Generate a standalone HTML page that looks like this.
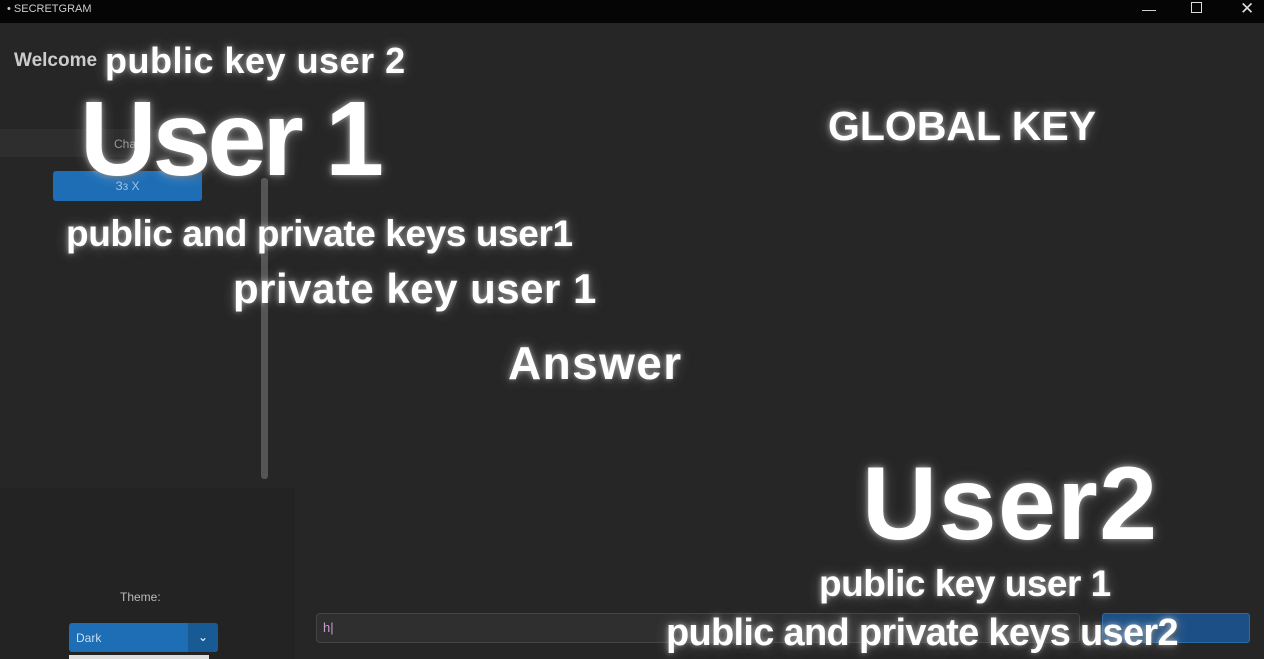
<!DOCTYPE html><html><head><style>
body{margin:0;width:1264px;height:659px;overflow:hidden;background:#262626;font-family:"Liberation Sans",sans-serif;position:relative}
.a{position:absolute}
.t{position:absolute;color:#fff;font-weight:bold;white-space:nowrap;text-shadow:0 0 6px rgba(255,255,255,.6),0 0 14px rgba(200,200,200,.4),2px 2px 3px rgba(0,0,0,.5);line-height:1}
</style></head><body>
<div class="a" style="left:0;top:0;width:1264px;height:23px;background:#050505"></div>
<div class="a" style="left:7px;top:3px;color:#ccc;font-size:11px">• SECRETGRAM</div>
<div class="a" style="left:1142px;top:1px;color:#ddd;font-size:14px">—</div>
<div class="a" style="left:1191px;top:2px;width:9px;height:9px;border:1px solid #ddd"></div>
<div class="a" style="left:1240px;top:-1px;color:#ddd;font-size:17px">✕</div>
<div class="a" style="left:0;top:23px;width:295px;height:636px;background:#232323"></div>
<div class="a" style="left:0;top:23px;width:295px;height:465px;background:#262626"></div>
<div class="a" style="left:14px;top:50px;color:#ccc;font-size:19px;font-weight:bold">Welcome</div>
<div class="a" style="left:0;top:129px;width:210px;height:28px;background:#2e2e2e"></div>
<div class="a" style="left:114px;top:137px;color:#999;font-size:12px">Cha</div>
<div class="a" style="left:53px;top:171px;width:149px;height:30px;background:#1e6eb5;border-radius:3px;color:#9cc2e6;font-size:12px;text-align:center;line-height:30px">Зз X</div>
<div class="a" style="left:261px;top:178px;width:7px;height:301px;background:#555;border-radius:3px"></div>
<div class="a" style="left:120px;top:590px;color:#bbb;font-size:12px">Theme:</div>
<div class="a" style="left:69px;top:623px;width:149px;height:29px;background:#1e6eb5;border-radius:3px"></div>
<div class="a" style="left:188px;top:623px;width:30px;height:29px;background:#175a94;border-radius:0 3px 3px 0;color:#fff;font-size:12px;text-align:center;line-height:29px">⌄</div>
<div class="a" style="left:76px;top:631px;color:#c8dcf0;font-size:12px">Dark</div>
<div class="a" style="left:69px;top:655px;width:140px;height:4px;background:#ddd"></div>
<div class="a" style="left:316px;top:613px;width:762px;height:28px;background:#2f2f2f;border:1px solid #444;border-radius:4px"></div>
<div class="a" style="left:323px;top:620px;color:#c9c;font-size:13px">h|</div>
<div class="a" style="left:1102px;top:613px;width:146px;height:28px;background:#1b4f85;border:1px solid #2a6aa8;border-radius:3px"></div>
<div class="t" style="left:105px;top:43px;font-size:36px;letter-spacing:0.5px">public key user 2</div>
<div class="t" style="left:80px;top:86px;font-size:106px;letter-spacing:-4px">User 1</div>
<div class="t" style="left:828px;top:106px;font-size:41px;letter-spacing:0px">GLOBAL KEY</div>
<div class="t" style="left:66px;top:215px;font-size:37px;letter-spacing:-0.4px">public and private keys user1</div>
<div class="t" style="left:233px;top:268px;font-size:42px;letter-spacing:0.5px">private key user 1</div>
<div class="t" style="left:508px;top:340px;font-size:46px;letter-spacing:1.4px">Answer</div>
<div class="t" style="left:862px;top:452px;font-size:104px;letter-spacing:1.5px">User2</div>
<div class="t" style="left:819px;top:565px;font-size:37px;letter-spacing:-0.5px">public key user 1</div>
<div class="t" style="left:666px;top:614px;font-size:38px;letter-spacing:-0.7px">public and private keys user2</div>
</body></html>
